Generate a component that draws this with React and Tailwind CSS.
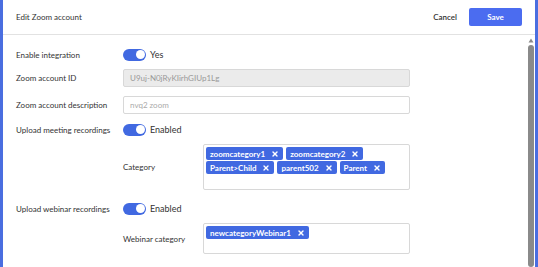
import { X } from "lucide-react";

function Toggle({ label }) {
    return (
        <div className="flex items-center gap-[4px]">
            <div className="w-[23px] h-[12px] rounded-full bg-[#4169e1] flex items-center justify-end pr-[1.5px]">
                <div className="w-[9px] h-[9px] rounded-full bg-white" />
            </div>
            <span className="text-[9px] text-[#333]">{label}</span>
        </div>
    );
}

function Chip({ text }) {
    return (
        <span className="inline-flex items-center h-[13px] pl-[4px] pr-[4px] gap-[6px] bg-[#4169e1] text-white font-bold rounded-[2px]">
            {text}
            <X size={8} strokeWidth={4} />
        </span>
    );
}

export default function App() {
    return (
        <div className="w-[538px] h-[267px] bg-[#4a6ee0] flex font-['Lato','Liberation_Sans',sans-serif] text-[8px] text-[#333] overflow-hidden">
            <div className="ml-[3px] mr-[3px] flex-1 bg-white flex flex-col">
                {/* Header */}
                <div className="h-[35px] shrink-0 border-b border-[#e2e2e2] flex items-center pl-[13px] pr-[13px]">
                    <span className="flex-1 text-[#333]">Edit Zoom account</span>
                    <span className="mr-[12px] font-semibold text-[#333]">Cancel</span>
                    <button className="w-[53px] h-[18px] rounded-[2px] bg-[#4b6cf0] text-white font-bold">Save</button>
                </div>

                <div className="flex flex-1 min-h-0">
                    {/* Body */}
                    <div className="flex-1 pl-[13px] pt-[13px] flex flex-col">
                        <div className="flex items-center h-[13px]">
                            <span className="w-[107px]">Enable integration</span>
                            <Toggle label="Yes" />
                        </div>
                        <div className="flex items-center h-[18px] mt-[8px]">
                            <span className="w-[107px]">Zoom account ID</span>
                            <div className="w-[287px] h-[18px] rounded-[2px] border border-[#d8d8d8] bg-[#ebebeb] flex items-center px-[6px] text-[#999]">
                                U9uj-N0jRyKIirhGIUp1Lg
                            </div>
                        </div>
                        <div className="flex items-center h-[18px] mt-[9px]">
                            <span className="w-[107px]">Zoom account description</span>
                            <div className="w-[287px] h-[18px] rounded-[2px] border border-[#d8d8d8] bg-white flex items-center px-[6px] text-[#aaa]">
                                nvq2 zoom
                            </div>
                        </div>
                        <div className="flex items-center h-[13px] mt-[9px]">
                            <span className="w-[107px]">Upload meeting recordings</span>
                            <Toggle label="Enabled" />
                        </div>
                        <div className="flex items-center mt-[8px] ml-[107px]">
                            <span className="w-[80px]">Category</span>
                            <div className="w-[207px] h-[46px] rounded-[2px] border border-[#d8d8d8] p-[2px] flex flex-wrap content-start gap-x-[3px] gap-y-[1px]">
                                <Chip text="zoomcategory1" />
                                <Chip text="zoomcategory2" />
                                <Chip text="Parent>Child" />
                                <Chip text="parent502" />
                                <Chip text="Parent" />
                            </div>
                        </div>
                        <div className="flex items-center h-[13px] mt-[12px]">
                            <span className="w-[107px]">Upload webinar recordings</span>
                            <Toggle label="Enabled" />
                        </div>
                        <div className="flex items-center mt-[8px] ml-[107px]">
                            <span className="w-[80px]">Webinar category</span>
                            <div className="w-[207px] h-[31px] rounded-[2px] border border-[#d8d8d8] p-[2px] flex flex-wrap content-start gap-[3px]">
                                <Chip text="newcategoryWebinar1" />
                            </div>
                        </div>
                    </div>

                    {/* Scrollbar */}
                    <div className="w-[9px] shrink-0 flex flex-col items-center pt-[3px]">
                        <svg width="6" height="5" viewBox="0 0 6 5"><path d="M3 0.5 L5.5 4.5 H0.5 Z" fill="#8a8a8a" /></svg>
                        <div className="w-[6px] flex-1 mt-[2px] rounded-[3px] bg-[#8a8a8a]" />
                    </div>
                </div>
            </div>
        </div>
    );
}
